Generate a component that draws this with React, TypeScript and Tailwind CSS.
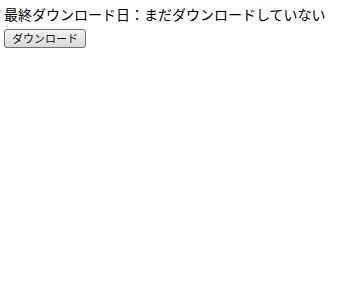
export default function App() {
  return (
    <div className="min-h-[298px] bg-white px-1 pt-[4px] text-black font-['Noto_Sans_CJK_JP',sans-serif]">
      <div className="text-[14px] leading-[20px]">最終ダウンロード日：まだダウンロードしていない</div>
      <button className="mt-[2px] h-[19px] w-[82px] rounded-[3px] border border-[#707070] bg-gradient-to-b from-[#f4f4f4] to-[#d8d8d8] text-[11px] font-normal leading-none text-[#111]">
        ダウンロード
      </button>
    </div>
  );
}
